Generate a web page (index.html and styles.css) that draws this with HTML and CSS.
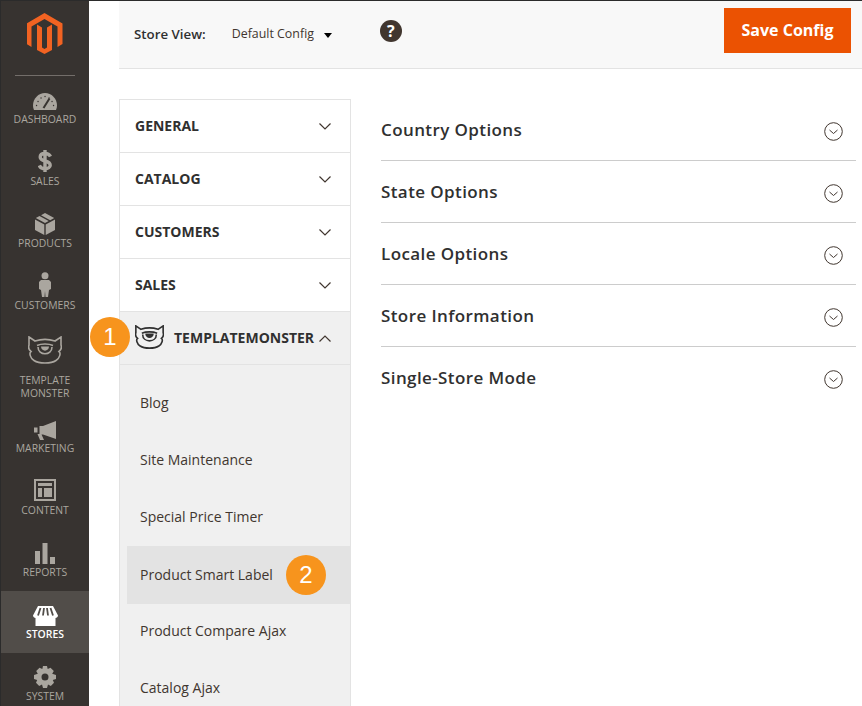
FILE: index.html
```html
<!DOCTYPE html>
<html lang="en">
<head>
    <meta charset="UTF-8">
    <meta name="viewport" content="width=device-width, initial-scale=1.0">
    <title>Configuration</title>
    <link rel="stylesheet" href="styles.css">
</head>
<body>
    <div class="page">
        <nav class="sidebar">
            <div class="logo">
                <svg width="36" height="41" viewBox="28 13 36 41">
                    <path fill="#f26322" d="M45.5 13 63.5 23.5V44L58.5 47V26.5L45.5 19 32.5 26.5V47L27.5 44V23.5Z"/>
                    <path fill="#f26322" d="M38 24.5 43 27.500V47.500L45.500 49 48 47.500V27.500L53 24.500V50L45.500 54 38 50Z"/>
                </svg>
            </div>
            <a class="nav-item">
                <svg width="24" height="18" viewBox="0 0 24 18"><path fill="#aaa69f" d="M1 17C.3 15.500 0 14 0 12.500 0 5.500 5.500 0 12 0s12 5.500 12 12.500c0 1.500-.3 3-1 4.500Z"/><path fill="none" stroke="#373330" stroke-width="2" d="M10.500 15 16.500 5.500"/><path fill="none" stroke="#373330" stroke-width="1.300" stroke-linecap="round" d="M3.500 12.500h.1M5 8.500h.1M8 5h.1M12 3.500h.1M16 5h.1M19 8.500h.1M20.500 12.500h.1"/></svg>
                <span>Dashboard</span>
            </a>
            <a class="nav-item">
                <svg width="14" height="24" viewBox="0 0 14 24"><path fill="none" stroke="#aaa69f" stroke-width="3.400" d="M12.500 7.500C11.500 5.500 9.500 4.500 7 4.500 4 4.500 2.200 6 2.200 8c0 5.500 10 2.500 10 8.200 0 2-2 3.500-5.200 3.500-2.800 0-4.800-1.200-5.700-3.300M7 1v22"/></svg>
                <span>Sales</span>
            </a>
            <a class="nav-item">
                <svg width="20" height="22" viewBox="0 0 20 22"><path fill="#aaa69f" d="M0 6.500 9.300 11.500V22L0 17ZM20 6.500 10.700 11.500V22L20 17ZM.8 5 4.500 3 13.700 8 10 10ZM6 2.200 10 0 19.200 5 15.200 7.200Z"/></svg>
                <span>Products</span>
            </a>
            <a class="nav-item">
                <svg width="12" height="25" viewBox="0 0 12 25"><circle cx="6" cy="3.700" r="3.500" fill="#aaa69f"/><path fill="#aaa69f" d="M2 8H10L12 10V17L10 18 9 25H6.500L6 19 5.500 25H3L2 18 0 17V10Z"/></svg>
                <span>Customers</span>
            </a>
            <a class="nav-item nav-item-tall">
                <svg width="34" height="28" viewBox="0 0 34 28"><g fill="none" stroke="#aaa69f" stroke-width="1.600"><path d="M1 1 7 5C13 3 21 3 27 5L33 1V9C34 12 33 14 31 15.500 33 17 32 22 28 24.500 25 26.500 21 27 17 27S9 26.500 6 24.500C2 22 1 17 3 15.500 1 14 0 12 1 9Z"/><path d="M9 9.500C13 7.500 21 7.500 25 9.500"/><path d="M10 11C10 20 24 20 24 11"/></g><path fill="#aaa69f" d="M13 10.500H21C21 16 13 16 13 10.500Z"/></svg>
                <span>Template<br>Monster</span>
            </a>
            <a class="nav-item">
                <svg width="23" height="19" viewBox="0 0 23 19"><path fill="#aaa69f" d="M22 0V18L9 13.500H7.500L10 19H6L3.500 13H5.500V5H9ZM0 6.500H3.500V11.500H0Z"/></svg>
                <span>Marketing</span>
            </a>
            <a class="nav-item">
                <svg class="icon-content" width="22" height="22" viewBox="0 0 22 22"><path fill="#aaa69f" fill-rule="evenodd" d="M0 0H22V22H0ZM2 2V20H20V2ZM4 4H18V7H4ZM4 9H8V18H4ZM10 9H18V18H10Z"/></svg>
                <span>Content</span>
            </a>
            <a class="nav-item">
                <svg width="20" height="21" viewBox="0 0 20 21"><path fill="#aaa69f" d="M0 8H5V21H0ZM7.500 0H12.500V21H7.500ZM15 14H20V21H15Z"/></svg>
                <span>Reports</span>
            </a>
            <a class="nav-item nav-item-active">
                <svg width="25" height="20" viewBox="0 0 25 20"><path fill="#fff" d="M5 0H20L25 9.500C25 11 23.500 12 22.500 12V20H2.500V12C1.500 12 0 11 0 9.500Z"/><path stroke="#514d49" stroke-width="1.800" d="M7.500 2 5 9.500M11 2 10 9.500M14 2 15 9.500M17.500 2 20 9.500"/></svg>
                <span>Stores</span>
            </a>
            <a class="nav-item">
                <svg width="22" height="22" viewBox="0 0 22 22"><path fill="#aaa69f" fill-rule="evenodd" d="M9 0H13L13.700 3 16.500 1.800 19.800 5 18.200 7.800 22 9V13L18.800 14 20 16.800 16.800 20 14 18.500 13 22H9L8 18.500 5.200 20 2 16.800 3.200 14 0 13V9L3.800 7.800 2.200 5 5.500 1.800 8.300 3ZM11 7.500A3.500 3.500 0 1 0 11 14.500 3.500 3.500 0 1 0 11 7.500Z"/></svg>
                <span>System</span>
            </a>
        </nav>

        <div class="main">
            <header class="topbar">
                <span class="store-label">Store View:</span>
                <span class="store-value">Default Config</span>
                <span class="caret"></span>
                <span class="help">?</span>
                <button class="save-btn">Save Config</button>
            </header>

            <div class="columns">
                <aside class="tabs">
                    <div class="tab">General <svg class="chev" width="12" height="7" viewBox="0 0 12 7"><path d="M.5.500 6 6 11.500.500"/></svg></div>
                    <div class="tab">Catalog <svg class="chev" width="12" height="7" viewBox="0 0 12 7"><path d="M.5.500 6 6 11.500.500"/></svg></div>
                    <div class="tab">Customers <svg class="chev" width="12" height="7" viewBox="0 0 12 7"><path d="M.5.500 6 6 11.500.500"/></svg></div>
                    <div class="tab">Sales <svg class="chev" width="12" height="7" viewBox="0 0 12 7"><path d="M.5.500 6 6 11.500.500"/></svg></div>
                    <div class="tab tab-open">
                        <span class="badge badge-over">1</span>
                        <svg class="tm-logo" width="29" height="24" viewBox="0 0 34 28"><g fill="none" stroke="#303030" stroke-width="1.900"><path d="M1 1 7 5C13 3 21 3 27 5L33 1V9C34 12 33 14 31 15.500 33 17 32 22 28 24.500 25 26.500 21 27 17 27S9 26.500 6 24.500C2 22 1 17 3 15.500 1 14 0 12 1 9Z"/><path d="M8 9.500C13 7.500 21 7.500 26 9.500"/><path d="M9 11C9 21 25 21 25 11"/></g><path fill="#303030" d="M12 10H22C22 17 12 17 12 10Z"/></svg>
                        <span>TemplateMonster</span>
                        <svg class="chev chev-up" width="12" height="7" viewBox="0 0 12 7"><path d="M.5 6.500 6 1 11.500 6.500"/></svg>
                    </div>
                    <ul class="sub">
                        <li>Blog</li>
                        <li>Site Maintenance</li>
                        <li>Special Price Timer</li>
                        <li class="sub-active">Product Smart Label <span class="badge">2</span></li>
                        <li>Product Compare Ajax</li>
                        <li>Catalog Ajax</li>
                    </ul>
                </aside>

                <section class="options">
                    <div class="option">Country Options <svg class="round" width="19" height="19" viewBox="0 0 19 19"><circle cx="9.500" cy="9.500" r="8.800"/><path d="M5.500 8 9.500 11.500 13.500 8"/></svg></div>
                    <div class="option">State Options <svg class="round" width="19" height="19" viewBox="0 0 19 19"><circle cx="9.500" cy="9.500" r="8.800"/><path d="M5.500 8 9.500 11.500 13.500 8"/></svg></div>
                    <div class="option">Locale Options <svg class="round" width="19" height="19" viewBox="0 0 19 19"><circle cx="9.500" cy="9.500" r="8.800"/><path d="M5.500 8 9.500 11.500 13.500 8"/></svg></div>
                    <div class="option">Store Information <svg class="round" width="19" height="19" viewBox="0 0 19 19"><circle cx="9.500" cy="9.500" r="8.800"/><path d="M5.500 8 9.500 11.500 13.500 8"/></svg></div>
                    <div class="option option-last">Single-Store Mode <svg class="round" width="19" height="19" viewBox="0 0 19 19"><circle cx="9.500" cy="9.500" r="8.800"/><path d="M5.500 8 9.500 11.500 13.500 8"/></svg></div>
                </section>
            </div>
        </div>
    </div>
</body>
</html>
```

FILE: styles.css
```css
html, body {
    margin: 0;
    height: 706px;
    overflow: hidden;
    background: #fff;
}
body {
    font-family: "Open Sans", sans-serif;
    color: #303030;
}
.page {
    display: flex;
    height: 705px;
    border-top: 1px solid #2b2b2b;
    overflow: hidden;
}

/* left menu */
.sidebar {
    width: 88px;
    flex: none;
    background: #373330;
    border-left: 1px solid #2b2b2b;
}
.logo {
    height: 75px;
    display: flex;
    justify-content: center;
    padding-top: 12px;
    box-sizing: border-box;
    position: relative;
}
.logo::after {
    content: "";
    position: absolute;
    left: 14px;
    right: 14px;
    bottom: 0;
    height: 1px;
    background: #736e6a;
}
.nav-item {
    height: 62px;
    display: flex;
    flex-direction: column;
    align-items: center;
    justify-content: flex-end;
    padding-bottom: 12px;
    box-sizing: border-box;
    gap: 2px;
    font-size: 10.4px;
    line-height: 13px;
    color: #aaa69f;
    text-transform: uppercase;
    text-align: center;
}
.nav-item-tall {
    height: 81px;
    gap: 10px;
    padding-bottom: 5px;
}
.nav-item-active {
    background: #514d49;
    color: #fff;
    font-weight: 600;
}
.icon-content {
    margin-bottom: 1px;
}

/* top bar */
.main {
    flex: 1;
    min-width: 0;
    padding-left: 30px;
}
.topbar {
    height: 67px;
    display: flex;
    align-items: center;
    background: #f8f8f8;
    border-bottom: 1px solid #e3e3e3;
    padding-left: 15px;
    padding-right: 11px;
    font-size: 12.4px;
}
.store-label {
    font-weight: 600;
    font-size: 13.3px;
    color: #303030;
    margin-top: -2px;
}
.store-value {
    margin-left: 26px;
    margin-top: -2px;
    color: #41362f;
}
.caret {
    width: 0;
    height: 0;
    margin-left: 10px;
    margin-top: 1px;
    border-left: 4px solid transparent;
    border-right: 4px solid transparent;
    border-top: 5px solid #000;
}
.help {
    width: 22px;
    height: 22px;
    margin-left: 48px;
    margin-top: -7px;
    border-radius: 50%;
    background: #41362f;
    color: #fff;
    font-size: 16px;
    font-weight: 700;
    line-height: 22px;
    text-align: center;
}
.save-btn {
    margin-left: auto;
    margin-top: -8px;
    width: 127px;
    height: 45px;
    padding: 0 0 2px;
    border: none;
    background: #eb5202;
    color: #fff;
    font-family: "Open Sans", sans-serif;
    font-size: 16px;
    font-weight: 700;
    cursor: pointer;
}

/* config tabs */
.columns {
    display: flex;
    padding-top: 30px;
}
.tabs {
    width: 232px;
    flex: none;
    box-sizing: border-box;
    border: 1px solid #e3e3e3;
    margin-right: 30px;
    position: relative;
}
.tab {
    height: 53px;
    box-sizing: border-box;
    display: flex;
    align-items: center;
    justify-content: space-between;
    padding: 0 19px 2px 15px;
    border-bottom: 1px solid #e3e3e3;
    font-size: 14px;
    font-weight: 700;
    text-transform: uppercase;
    color: #303030;
}
.chev {
    fill: none;
    stroke: #41362f;
    stroke-width: 1.200;
    margin-top: 2px;
}
.tab-open {
    background: #f0f0f0;
    justify-content: flex-start;
}
.tm-logo {
    margin-right: 10px;
}
.chev-up {
    margin-left: auto;
}
.badge {
    width: 40px;
    height: 40px;
    border-radius: 50%;
    background: #f7941d;
    color: #fff;
    font-size: 24px;
    font-weight: 400;
    font-family: "Liberation Sans", sans-serif;
    line-height: 40px;
    text-align: center;
    flex: none;
}
.badge-over {
    position: absolute;
    left: -30px;
    top: 217px;
}
.sub {
    list-style: none;
    margin: 0;
    padding: 10px 0 0 7px;
    background: #f0f0f0;
    height: 400px;
}
.sub li {
    height: 57px;
    box-sizing: border-box;
    display: flex;
    align-items: center;
    gap: 13px;
    padding: 0 0 3px 13px;
    font-size: 14px;
    color: #41362f;
}
.sub .sub-active {
    height: 58px;
    padding-bottom: 1px;
    background: #e3e3e3;
}
.sub .sub-active + li {
    height: 56px;
}

/* right side */
.options {
    width: 475px;
}
.option {
    height: 62px;
    box-sizing: border-box;
    display: flex;
    align-items: center;
    justify-content: space-between;
    padding-right: 13px;
    border-bottom: 1px solid #cccccc;
    font-size: 17px;
    font-weight: 600;
    letter-spacing: .4px;
    color: #303030;
}
.option-last {
    border-bottom-color: transparent;
}
.round {
    fill: none;
    stroke: #41362f;
    stroke-width: 1;
    margin-top: 3px;
}
```
